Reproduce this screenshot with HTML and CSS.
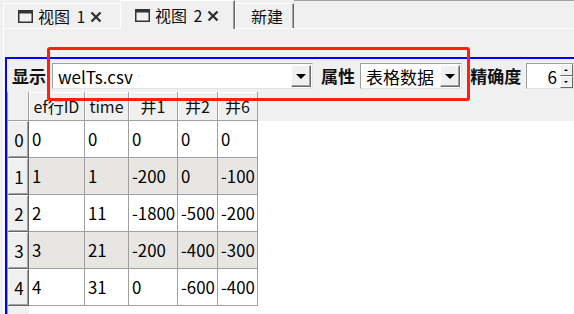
FILE: index.html
```html
<!DOCTYPE html>
<html lang="zh-CN">
<head>
  <meta charset="UTF-8">
  <title>视图</title>
  <link rel="stylesheet" href="styles.css">
</head>
<body>
  <div class="tabbar">
    <div class="tab">
      <svg class="win-icon" width="15" height="13" viewBox="0 0 15 13"><rect x="0.75" y="0.75" width="13.5" height="11.5" fill="none" stroke="#333" stroke-width="1.5"/><rect x="0" y="0" width="15" height="3.5" fill="#333"/></svg>
      <span class="tab-text">视图 1</span>
      <svg class="close-icon" width="12" height="12" viewBox="0 0 12 12"><path d="M1.5 1.5L10.5 10.5M10.5 1.5L1.5 10.5" stroke="#333" stroke-width="2.4"/></svg>
    </div>
    <div class="tab active">
      <svg class="win-icon" width="15" height="13" viewBox="0 0 15 13"><rect x="0.75" y="0.75" width="13.5" height="11.5" fill="none" stroke="#333" stroke-width="1.5"/><rect x="0" y="0" width="15" height="3.5" fill="#333"/></svg>
      <span class="tab-text">视图 2</span>
      <svg class="close-icon" width="12" height="12" viewBox="0 0 12 12"><path d="M1.5 1.5L10.5 10.5M10.5 1.5L1.5 10.5" stroke="#333" stroke-width="2.4"/></svg>
    </div>
    <div class="tab new">新建</div>
    <div class="tab-fill"></div>
  </div>

  <div class="pane">
    <div class="frame">
      <div class="toolbar">
        <span class="label">显示</span>
        <div class="combo file">
          <span class="combo-text">welTs.csv</span>
          <span class="drop"><i class="tri"></i></span>
        </div>
        <span class="label">属性</span>
        <div class="combo prop">
          <span class="combo-text">表格数据</span>
          <span class="drop"><i class="tri"></i></span>
        </div>
        <span class="label">精确度</span>
        <div class="spin">
          <span class="spin-text">6</span>
          <span class="spin-btns">
            <span class="spin-btn"><i class="tri-up"></i></span>
            <span class="spin-btn"><i class="tri-small"></i></span>
          </span>
        </div>
      </div>

      <div class="view">
        <div class="grid">
          <div class="hcell corner"></div>
          <div class="hcell">ef行ID</div>
          <div class="hcell">time</div>
          <div class="hcell">井1</div>
          <div class="hcell">井2</div>
          <div class="hcell">井6</div>

          <div class="rcell">0</div>
          <div class="cell">0</div><div class="cell">0</div><div class="cell">0</div><div class="cell">0</div><div class="cell">0</div>

          <div class="rcell">1</div>
          <div class="cell alt">1</div><div class="cell alt">1</div><div class="cell alt">-200</div><div class="cell alt">0</div><div class="cell alt">-100</div>

          <div class="rcell">2</div>
          <div class="cell">2</div><div class="cell">11</div><div class="cell">-1800</div><div class="cell">-500</div><div class="cell">-200</div>

          <div class="rcell">3</div>
          <div class="cell alt">3</div><div class="cell alt">21</div><div class="cell alt">-200</div><div class="cell alt">-400</div><div class="cell alt">-300</div>

          <div class="rcell">4</div>
          <div class="cell">4</div><div class="cell">31</div><div class="cell">0</div><div class="cell">-600</div><div class="cell">-400</div>
        </div>
      </div>
    </div>
  </div>

  <div class="highlight"></div>
</body>
</html>
```

FILE: styles.css
```css
body {
  margin: 0;
  width: 574px;
  height: 314px;
  overflow: hidden;
  background: #f0f0f0;
  font-family: 'Noto Sans CJK SC', 'Noto Sans', sans-serif;
  color: #000;
  position: relative;
}
.tabbar {
  display: flex;
  align-items: flex-end;
  height: 28px;
  padding-left: 3px;
}
.tab {
  display: flex;
  align-items: center;
  box-sizing: border-box;
  height: 25px;
  background: #f0f0f0;
  border-top: 1px solid #fff;
  border-left: 1px solid #fff;
  font-size: 16px;
  color: #111;
}
.tab:first-child {
  width: 117px;
  padding-left: 14px;
}
.tab.active {
  position: relative;
  z-index: 1;
  width: 115px;
  height: 29px;
  margin-bottom: -1px;
  padding-left: 14px;
  border-right: 1px solid #696969;
  box-shadow: inset -1px 0 #a0a0a0;
}
.tab.new {
  width: 59px;
  padding-left: 15px;
  border-right: 1px solid #696969;
  box-shadow: inset -1px 0 #a0a0a0;
}
.tab-fill {
  flex: 1;
  align-self: stretch;
  border-top: 1px solid #a0a0a0;
}
.win-icon {
  margin-right: 5px;
  margin-top: 1px;
}
.tab-text {
  margin-right: 5px;
  word-spacing: 3px;
}
.close-icon {
  margin-top: 1px;
}
.pane {
  margin-left: 3px;
  border-top: 1px solid #fff;
  border-left: 1px solid #fff;
  padding: 28px 0 0 1px;
  height: 257px;
}
.frame {
  border-top: 2px solid #0000fe;
  border-left: 2px solid #0000fe;
  height: 255px;
}
.toolbar {
  display: flex;
  align-items: center;
  height: 33px;
  padding-left: 5px;
  white-space: nowrap;
}
.label {
  font-size: 17px;
  font-weight: bold;
  color: #111;
}
.combo, .spin {
  display: flex;
  align-items: center;
  box-sizing: border-box;
  height: 26px;
  margin-top: 1px;
  background: #fff;
  border: 1px solid #a0a0a0;
  border-right-color: #e3e3e3;
  border-bottom-color: #e3e3e3;
}
.combo.file {
  width: 263px;
  margin: 1px 8px 0 6px;
}
.combo.prop {
  width: 103px;
  margin: 1px 8px 0 5px;
}
.combo-text {
  flex: 1;
  padding-left: 5px;
  font-size: 17px;
}
.drop {
  display: flex;
  align-items: center;
  justify-content: center;
  box-sizing: border-box;
  width: 20px;
  height: 22px;
  margin-right: 1px;
  background: #f0f0f0;
  border: 1px solid #fff;
  border-right-color: #696969;
  border-bottom-color: #696969;
  box-shadow: inset -1px -1px #a0a0a0;
}
.tri {
  width: 0;
  height: 0;
  border-left: 5px solid transparent;
  border-right: 5px solid transparent;
  border-top: 5px solid #000;
}
.spin {
  width: 48px;
  margin-left: 5px;
}
.spin-text {
  flex: 1;
  text-align: right;
  padding-right: 3px;
  font-size: 17px;
}
.spin-btns {
  display: flex;
  flex-direction: column;
  width: 13px;
  height: 24px;
}
.spin-btn {
  display: flex;
  align-items: center;
  justify-content: center;
  box-sizing: border-box;
  height: 12px;
  background: #f0f0f0;
  border: 1px solid #fff;
  border-right-color: #696969;
  border-bottom-color: #696969;
}
.tri-up {
  width: 0;
  height: 0;
  border-left: 2px solid transparent;
  border-right: 2px solid transparent;
  border-bottom: 2px solid #000;
}
.tri-small {
  width: 0;
  height: 0;
  border-left: 2px solid transparent;
  border-right: 2px solid transparent;
  border-top: 2px solid #000;
}
.view {
  border-left: 1px solid #a0a0a0;
  height: 222px;
  background:
    linear-gradient(#f0f0f0 0 29px, transparent 29px),
    linear-gradient(to right, #f0f0f0 0 21px, #fff 21px);
}
.grid {
  display: grid;
  grid-template-columns: 21px 56px 44px 49px 40px 40px;
  grid-template-rows: 29px repeat(5, 37px);
  width: 250px;
  font-size: 16px;
}
.hcell, .rcell, .cell {
  box-sizing: border-box;
  display: flex;
  align-items: center;
  overflow: hidden;
  white-space: nowrap;
}
.hcell {
  justify-content: center;
  background: #f0f0f0;
  border-right: 1px solid #a0a0a0;
  border-bottom: 1px solid #a0a0a0;
  box-shadow: inset 1px 1px #fff;
  color: #111;
}
.hcell.corner {
  box-shadow: none;
}
.rcell {
  justify-content: center;
  background: #f0f0f0;
  border-right: 1px solid #696969;
  border-bottom: 1px solid #696969;
  box-shadow: inset 1px 1px #fff, inset -1px -1px #a0a0a0;
  padding-left: 2px;
  font-size: 17px;
}
.cell {
  padding-left: 3px;
  background: #fff;
  border-right: 1px solid #a0a0a0;
  border-bottom: 1px solid #a0a0a0;
  font-size: 16.8px;
}
.cell.alt {
  background: #e8e6e3;
}
.highlight {
  position: absolute;
  left: 47px;
  top: 47px;
  width: 423px;
  height: 54px;
  box-sizing: border-box;
  border: 3px solid #ff1e12;
  border-radius: 3px;
}
```
